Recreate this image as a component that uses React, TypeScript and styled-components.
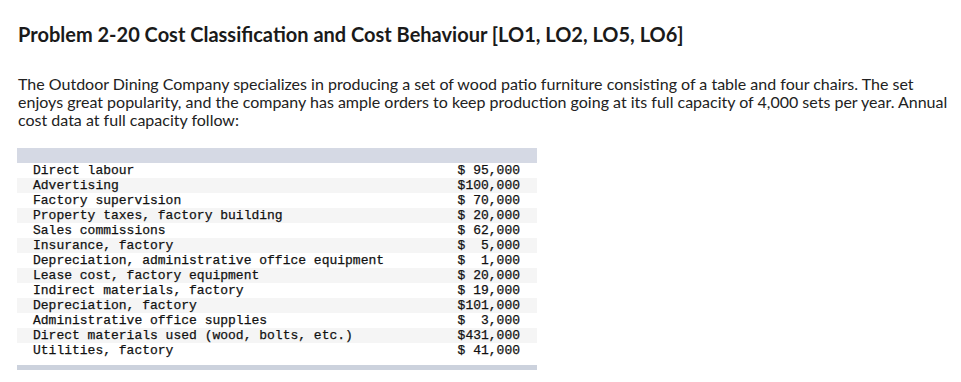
import styled, { createGlobalStyle } from "styled-components";

const GlobalStyle = createGlobalStyle`
  body {
    margin: 0;
    background: #ffffff;
    color: #222222;
  }
`;

const Page = styled.div`
  padding: 23px 8px 0 18px;
  font-family: Lato, "Open Sans", sans-serif;
`;

const Title = styled.h2`
  margin: 0;
  font-size: 20px;
  line-height: 22px;
  font-weight: 700;
  color: #1a1a1a;
`;

const Intro = styled.p`
  margin: 30px 0 0;
  font-size: 16px;
  line-height: 18px;
  color: #222222;
`;

const Table = styled.div`
  margin-top: 19px;
  margin-left: -1px;
  width: 520px;
  font-family: "Liberation Mono", "DejaVu Sans Mono", monospace;
  font-size: 13px;
  color: #111111;
`;

const Band = styled.div<{ $h: number; $bg: string }>`
  height: ${(p) => p.$h}px;
  background: ${(p) => p.$bg};
`;

const Row = styled.div<{ $shade: boolean }>`
  display: flex;
  justify-content: space-between;
  height: 15px;
  line-height: 15px;
  padding: 0 17px 0 16px;
  white-space: pre;
  -webkit-text-stroke: 0.25px #111111;
  background: ${(p) => (p.$shade ? "#f5f5f5" : "#ffffff")};
`;

const Gap = styled.div`
  height: 7px;
`;

const rows: [string, string][] = [
  ["Direct labour", "$ 95,000"],
  ["Advertising", "$100,000"],
  ["Factory supervision", "$ 70,000"],
  ["Property taxes, factory building", "$ 20,000"],
  ["Sales commissions", "$ 62,000"],
  ["Insurance, factory", "$  5,000"],
  ["Depreciation, administrative office equipment", "$  1,000"],
  ["Lease cost, factory equipment", "$ 20,000"],
  ["Indirect materials, factory", "$ 19,000"],
  ["Depreciation, factory", "$101,000"],
  ["Administrative office supplies", "$  3,000"],
  ["Direct materials used (wood, bolts, etc.)", "$431,000"],
  ["Utilities, factory", "$ 41,000"],
];

const App = () => (
  <>
    <GlobalStyle />
    <Page>
      <Title>Problem 2-20 Cost Classification and Cost Behaviour [LO1, LO2, LO5, LO6]</Title>
      <Intro>
        The Outdoor Dining Company specializes in producing a set of wood patio furniture consisting of a table and four chairs. The set
        <br />
        enjoys great popularity, and the company has ample orders to keep production going at its full capacity of 4,000 sets per year. Annual
        <br />
        cost data at full capacity follow:
      </Intro>
      <Table>
        <Band $h={15} $bg="#d5d9e4" />
        {rows.map(([label, amount], i) => (
          <Row key={label} $shade={i % 2 === 1}>
            <span>{label}</span>
            <span>{amount}</span>
          </Row>
        ))}
        <Gap />
        <Band $h={5} $bg="#ccd2dd" />
      </Table>
    </Page>
  </>
);

export default App;
